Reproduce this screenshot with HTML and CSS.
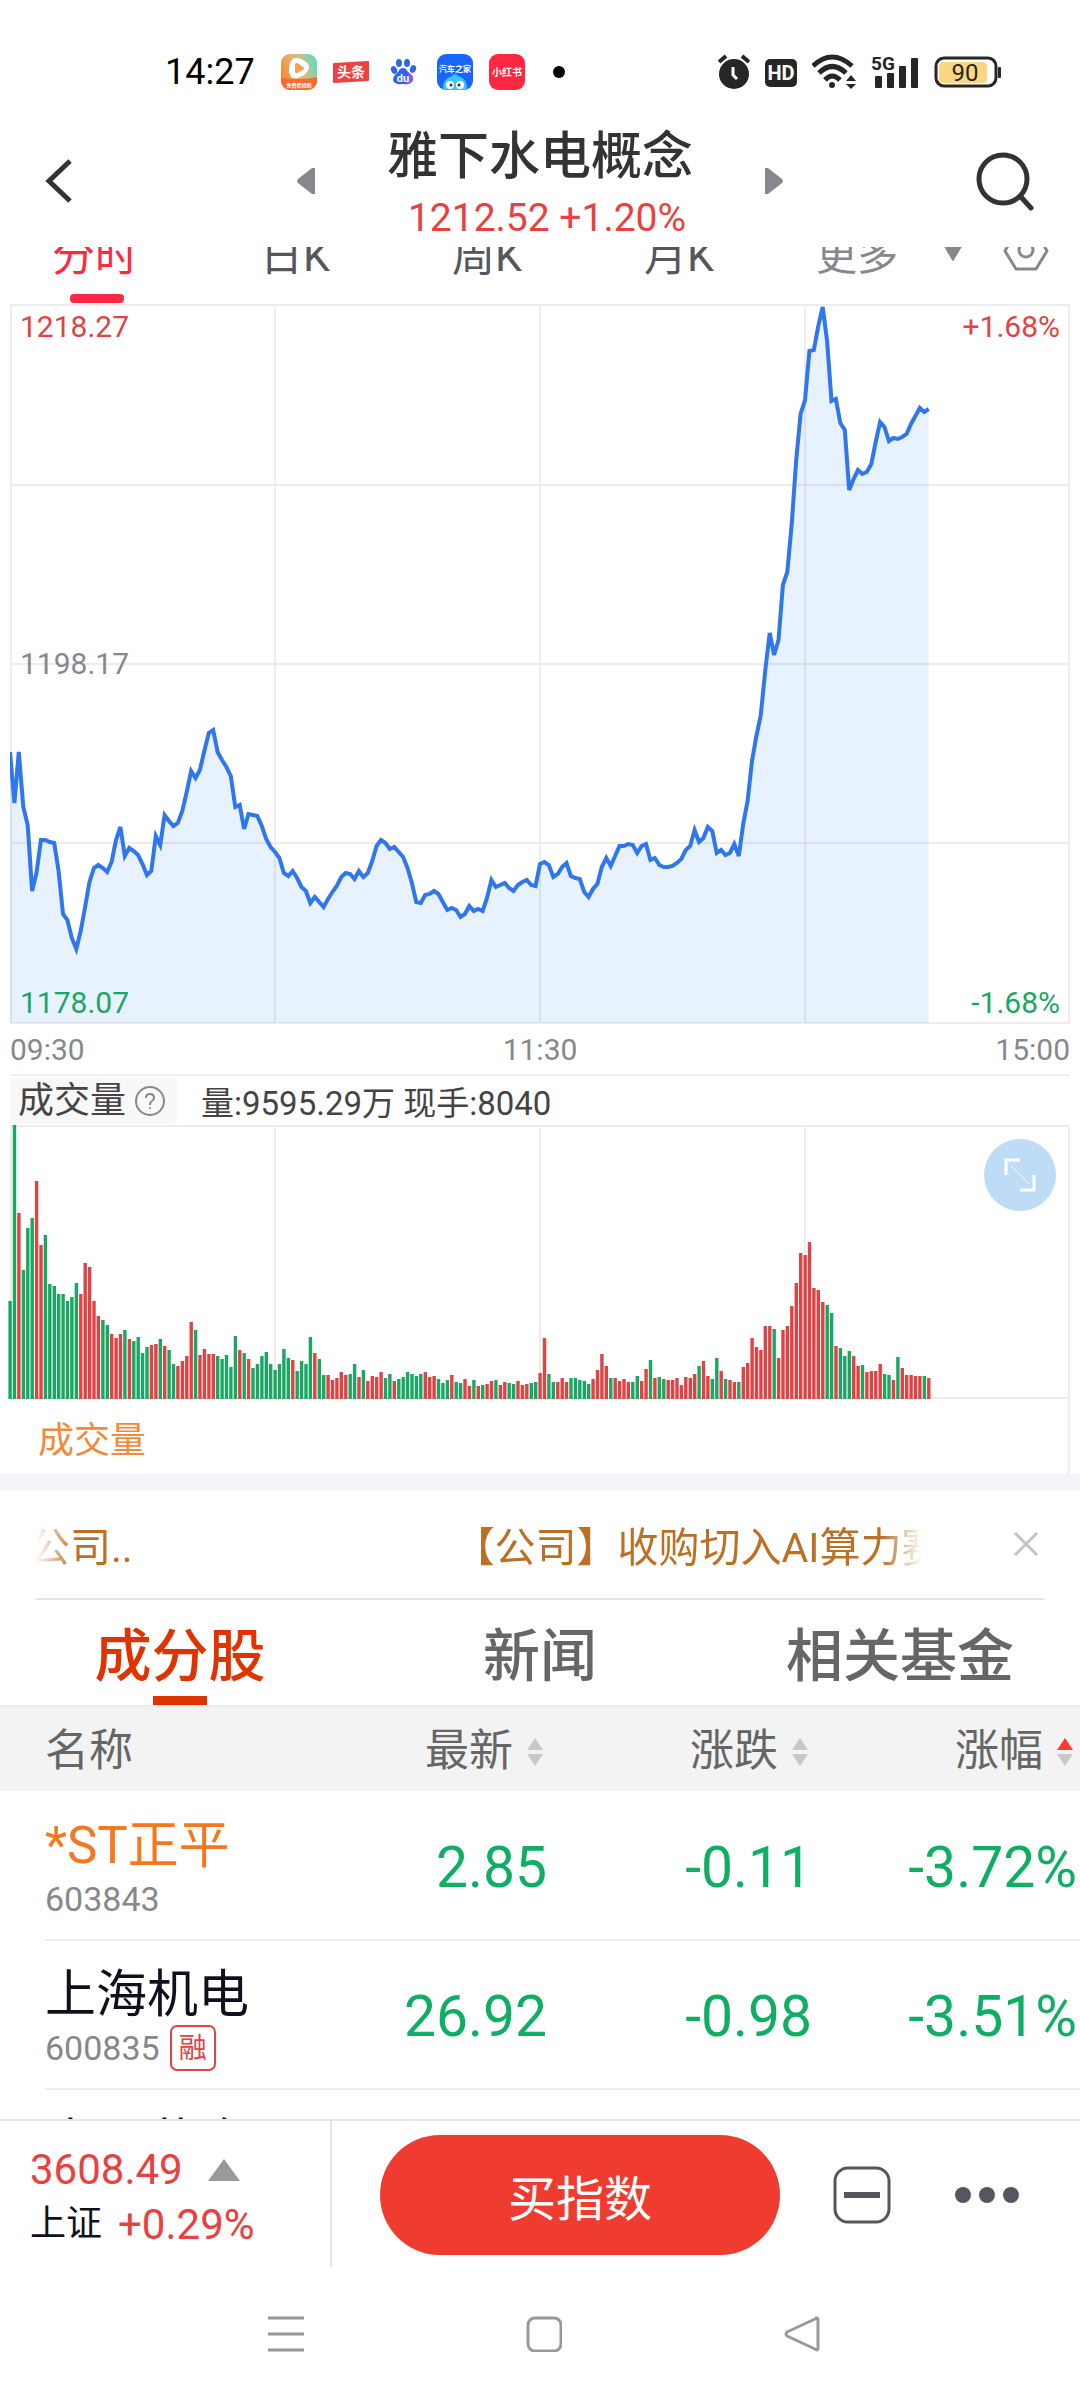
FILE: index.html
```html
<!DOCTYPE html>
<html lang="zh-CN">
<head>
    <meta charset="UTF-8">
    <meta name="viewport" content="width=device-width, initial-scale=1.0">
    <title>雅下水电概念</title>
    <link rel="stylesheet" href="styles.css">
</head>
<body>
    <div class="status-bar">
        <div class="status-left">
            <span class="clock">14:27</span>
            <svg class="app-icon" viewBox="0 0 36 36">
                <defs>
                    <linearGradient id="video" x1="0" y1="0.6" x2="1" y2="0.2">
                        <stop offset="0" stop-color="#f58a3c"/>
                        <stop offset="0.5" stop-color="#e0b878"/>
                        <stop offset="1" stop-color="#5fdcc0"/>
                    </linearGradient>
                    <clipPath id="round"><rect width="36" height="36" rx="9"/></clipPath>
                </defs>
                <g clip-path="url(#round)">
                    <rect width="36" height="36" fill="url(#video)"/>
                    <path d="M0 24 Q18 27 36 23 V36 H0Z" fill="#fb6a2c"/>
                    <path d="M10 7 Q13 2 20 5 Q29 9 28 14 Q27 20 17 24 Q9 26 8 17 Q8 11 10 7Z" fill="#fff"/>
                    <path d="M14 10 Q15 8 18 10 L22 13 Q24 15 22 16 L16 19 Q14 20 14 17Z" fill="#eda358"/>
                    <text x="18" y="33" class="t5">免费看短剧</text>
                </g>
            </svg>
            <svg class="app-icon" viewBox="0 0 36 36">
                <path d="M1 9 L35 7 Q36 7 36 8 V26 Q36 27 35 27 L1 29 Q0 29 0 28 V10 Q0 9 1 9Z" fill="#f04142"/>
                <text x="18" y="23" class="t14">头条</text>
            </svg>
            <svg class="app-icon" viewBox="0 0 36 36">
                <g fill="#2f66e8">
                    <ellipse cx="9" cy="16" rx="3" ry="4" transform="rotate(-20 9 16)"/>
                    <ellipse cx="14" cy="9" rx="3" ry="4"/>
                    <ellipse cx="22" cy="9" rx="3" ry="4"/>
                    <ellipse cx="28" cy="15" rx="3" ry="4" transform="rotate(20 28 15)"/>
                    <path d="M18 14 Q21 14 23 18 Q29 22 28 26 Q26 31 18 30 Q9 31 8 26 Q8 22 13 18 Q15 14 18 14Z"/>
                </g>
                <path d="M23 18 Q29 22 28 26 Q26 31 20 30 Q25 25 23 18Z" fill="#8a5cf0"/>
                <text x="18" y="28" class="t11">du</text>
            </svg>
            <svg class="app-icon" viewBox="0 0 36 36">
                <g clip-path="url(#round)">
                    <rect width="36" height="36" fill="#1a66fb"/>
                    <path d="M6 36 Q5 25 15 22 Q18 18 21 22 Q31 25 30 36Z" fill="#3cc4f5"/>
                    <circle cx="13" cy="31" r="4" fill="#fff"/>
                    <circle cx="23" cy="31" r="4" fill="#fff"/>
                    <circle cx="14" cy="31" r="1.5" fill="#333"/>
                    <circle cx="22" cy="31" r="1.5" fill="#333"/>
                </g>
                <text x="18" y="18" class="t8">汽车之家</text>
            </svg>
            <svg class="app-icon" viewBox="0 0 36 36">
                <rect width="36" height="36" rx="9" fill="#ff2741"/>
                <text x="18" y="22" class="t10">小红书</text>
            </svg>
            <span class="more-dot"></span>
        </div>
        <div class="status-right">
            <svg width="32" height="36" viewBox="0 0 32 36" fill="none" stroke="#262626">
                <circle cx="16" cy="20" r="15" fill="#262626" stroke="none"/>
                <path d="M1 8 L8 2 M24 2 L31 8" stroke-width="4"/>
                <path d="M15 13 V21 L19 25" stroke="#fff" stroke-width="3"/>
            </svg>
            <svg width="32" height="36" viewBox="0 0 32 36">
                <rect y="5" width="32" height="28" rx="5" fill="#262626"/>
                <text x="16" y="26" class="t20">HD</text>
            </svg>
            <svg width="44" height="36" viewBox="0 0 44 36" fill="none" stroke="#262626" stroke-width="5">
                <path d="M1 12 Q20 -6 40 12"/>
                <path d="M7 19 Q20 6 34 19"/>
                <path d="M13 26 Q20 18 28 26"/>
                <circle cx="20" cy="31" r="3" fill="#262626" stroke="none"/>
                <path d="M39 21 L44 27 H34Z M34 30 H44 L39 35Z" fill="#262626" stroke="none"/>
            </svg>
            <svg width="48" height="36" viewBox="0 0 48 36" fill="#262626">
                <rect x="4" y="22" width="7" height="12" rx="1"/>
                <rect x="16" y="19" width="7" height="15" rx="1"/>
                <rect x="28" y="12" width="7" height="22" rx="1"/>
                <rect x="40" y="4" width="7" height="30" rx="1"/>
                <text x="12" y="16" class="t19">5G</text>
            </svg>
            <svg width="68" height="36" viewBox="0 0 68 36">
                <rect x="2" y="4" width="60" height="28" rx="8" fill="#fff" stroke="#262626" stroke-width="3"/>
                <rect x="5" y="8" width="48" height="21" rx="4" fill="#fdd683"/>
                <rect x="64" y="13" width="3" height="11" rx="1" fill="#262626"/>
                <text x="31" y="27" class="t24">90</text>
            </svg>
        </div>
    </div>

    <header class="header">
        <button class="icon-btn back" aria-label="返回">
            <svg width="30" height="48" viewBox="0 0 30 48"><path d="M26 4 L5 24 L26 44" fill="none" stroke="#333" stroke-width="5"/></svg>
        </button>
        <div class="title-group">
            <button class="icon-btn" aria-label="上一个">
                <svg width="20" height="30" viewBox="0 0 20 30"><path d="M19 2 V28 L16 28 L2 17 Q0 15 2 13 L16 2Z" fill="#88878d"/></svg>
            </button>
            <div class="title">
                <h1>雅下水电概念</h1>
                <p>1212.52 +1.20%</p>
            </div>
            <button class="icon-btn" aria-label="下一个">
                <svg width="20" height="30" viewBox="0 0 20 30"><path d="M1 2 V28 L4 28 L18 17 Q20 15 18 13 L4 2Z" fill="#88878d"/></svg>
            </button>
        </div>
        <button class="icon-btn" aria-label="搜索">
            <svg width="60" height="60" viewBox="0 0 60 60" fill="none" stroke="#333" stroke-width="5" stroke-linecap="round">
                <circle cx="27" cy="28" r="24"/>
                <path d="M45 46 L55 57"/>
            </svg>
        </button>
    </header>

    <main class="content">
        <div class="period-tabs">
            <div class="periods">
                <button class="period active">分时</button>
                <button class="period">日K</button>
                <button class="period">周K</button>
                <button class="period">月K</button>
            </div>
            <div class="period-more">
                <button class="period muted">更多
                    <svg width="22" height="20" viewBox="0 0 22 20"><path d="M0 1 H22 L12 18 Q11 20 10 18Z" fill="#88878d"/></svg>
                </button>
                <button class="icon-btn" aria-label="设置">
                    <svg width="46" height="40" viewBox="0 0 46 40" fill="none" stroke="#88878d" stroke-width="3" stroke-linejoin="round">
                        <path d="M12 2 H34 L44 20 L33 38 H13 L2 20Z"/>
                        <circle cx="23" cy="19" r="7"/>
                    </svg>
                </button>
            </div>
        </div>

        <section class="chart">
            <div class="plot">
                <svg id="priceChart" viewBox="0 0 1060 720" preserveAspectRatio="none"></svg>
                <span class="mark top-left up">1218.27</span>
                <span class="mark top-right up">+1.68%</span>
                <span class="mark middle-left">1198.17</span>
                <span class="mark bottom-left down">1178.07</span>
                <span class="mark bottom-right down">-1.68%</span>
            </div>
            <div class="time-axis">
                <span>09:30</span>
                <span>11:30</span>
                <span>15:00</span>
            </div>
            <div class="volume-head">
                <button class="chip">成交量
                    <svg width="30" height="30" viewBox="0 0 30 30" fill="none" stroke="#88878d" stroke-width="2">
                        <circle cx="15" cy="15" r="14"/>
                        <path d="M11 12 Q11 8 15 8 Q19 8 19 12 Q19 14 16 16 Q15 17 15 19"/>
                        <circle cx="15" cy="22" r="1" fill="#88878d" stroke="none"/>
                    </svg>
                </button>
                <span>量:9595.29万 现手:8040</span>
            </div>
            <div class="volume-plot">
                <svg id="volumeChart" viewBox="0 0 1060 274" preserveAspectRatio="none"></svg>
                <button class="expand" aria-label="全屏">
                    <svg width="32" height="34" viewBox="0 0 32 34" fill="none" stroke="#fff" stroke-width="3">
                        <path d="M2 17 V2 H16 M30 17 V32 H16"/>
                        <path d="M7 8 L25 26" stroke-width="1"/>
                    </svg>
                </button>
            </div>
            <div class="indicator">成交量</div>
        </section>

        <div class="news-bar">
            <div class="marquee">
                <span>公司..</span>
                <span>【公司】收购切入AI算力赛道</span>
            </div>
            <button class="icon-btn" aria-label="关闭">
                <svg width="26" height="26" viewBox="0 0 26 26"><path d="M2 2 L24 24 M24 2 L2 24" stroke="#c4c4c4" stroke-width="3"/></svg>
            </button>
        </div>

        <div class="section-tabs">
            <button class="section-tab active">成分股</button>
            <button class="section-tab">新闻</button>
            <button class="section-tab">相关基金</button>
        </div>

        <table class="stocks">
            <thead>
                <tr>
                    <th>名称</th>
                    <th>最新<svg class="sort" viewBox="0 0 16 28"><path d="M8 0 L16 12 H0Z"/><path d="M0 16 H16 L8 28Z"/></svg></th>
                    <th>涨跌<svg class="sort" viewBox="0 0 16 28"><path d="M8 0 L16 12 H0Z"/><path d="M0 16 H16 L8 28Z"/></svg></th>
                    <th>涨幅<svg class="sort" viewBox="0 0 16 28"><path class="on" d="M8 0 L16 12 H0Z"/><path d="M0 16 H16 L8 28Z"/></svg></th>
                </tr>
            </thead>
            <tbody>
                <tr>
                    <td><div class="name st">*ST正平</div><div class="code">603843</div></td>
                    <td>2.85</td>
                    <td>-0.11</td>
                    <td>-3.72%</td>
                </tr>
                <tr>
                    <td><div class="name">上海机电</div><div class="code">600835<span class="badge">融</span></div></td>
                    <td>26.92</td>
                    <td>-0.98</td>
                    <td>-3.51%</td>
                </tr>
                <tr>
                    <td><div class="name">中国黄金</div></td>
                    <td></td>
                    <td></td>
                    <td></td>
                </tr>
            </tbody>
        </table>
    </main>

    <footer class="footer">
        <div class="market">
            <div class="market-row">3608.49
                <svg width="32" height="22" viewBox="0 0 32 22"><path d="M16 0 L32 22 H0Z" fill="#999"/></svg>
            </div>
            <div class="market-row"><span class="market-name">上证</span>+0.29%</div>
        </div>
        <div class="actions">
            <button class="buy">买指数</button>
            <button class="icon-btn" aria-label="删除自选">
                <svg width="58" height="58" viewBox="0 0 58 58" fill="none" stroke="#55565e">
                    <rect x="2" y="2" width="54" height="54" rx="13" stroke-width="3"/>
                    <path d="M11 29 H47" stroke-width="6"/>
                </svg>
            </button>
            <button class="icon-btn more" aria-label="更多">
                <svg width="64" height="16" viewBox="0 0 64 16" fill="#55565e">
                    <circle cx="8" cy="8" r="8"/>
                    <circle cx="32" cy="8" r="8"/>
                    <circle cx="56" cy="8" r="8"/>
                </svg>
            </button>
        </div>
    </footer>

    <nav class="system-nav">
        <button class="icon-btn" aria-label="最近任务">
            <svg width="36" height="36" viewBox="0 0 36 36" stroke="#999" stroke-width="3"><path d="M0 2 H36 M0 18 H36 M0 34 H36"/></svg>
        </button>
        <button class="icon-btn" aria-label="主页">
            <svg width="36" height="36" viewBox="0 0 36 36" fill="none" stroke="#999" stroke-width="3"><rect x="2" y="2" width="33" height="33" rx="7"/></svg>
        </button>
        <button class="icon-btn" aria-label="返回">
            <svg width="36" height="36" viewBox="0 0 36 36" fill="none" stroke="#999" stroke-width="3" stroke-linejoin="round"><path d="M34 3 V33 Q33 35 31 33 L3 20 Q1 18 3 16 L31 3 Q33 1 34 3Z"/></svg>
        </button>
    </nav>

    <script src="script.js"></script>
</body>
</html>
```

FILE: styles.css
```css
* {
    box-sizing: border-box;
}

body {
    margin: 0;
    height: 100vh;
    display: flex;
    flex-direction: column;
    background: #fff;
    color: #333;
    font-family: Roboto, "Noto Sans CJK SC", sans-serif;
}

button {
    margin: 0;
    padding: 0;
    border: none;
    background: none;
    color: inherit;
    font: inherit;
    cursor: pointer;
}

svg {
    display: block;
    flex-shrink: 0;
}

.icon-btn {
    display: flex;
    align-items: center;
}

.up {
    color: #e04343;
}

.down {
    color: #1aa764;
}

/* status bar */
.status-bar {
    display: flex;
    align-items: center;
    justify-content: space-between;
    height: 120px;
    padding: 24px 78px 0 165px;
}

.status-left {
    display: flex;
    align-items: center;
    gap: 16px;
}

.status-right {
    display: flex;
    align-items: center;
    gap: 15px;
}

.clock {
    margin-right: 10px;
    color: #000;
    font-size: 36px;
}

.app-icon {
    width: 36px;
    height: 36px;
}

.more-dot {
    width: 12px;
    height: 12px;
    margin-left: 12px;
    border-radius: 50%;
    background: #000;
}

.status-bar text {
    text-anchor: middle;
    fill: #fff;
    font-weight: 700;
}

.t5 { font-size: 5px; }
.t8 { font-size: 8px; }
.t10 { font-size: 10px; }
.t11 { font-size: 11px; }
.t14 { font-size: 14px; }
.t20 { font-size: 20px; }

.status-bar .t19 {
    fill: #262626;
    font-size: 19px;
}

.status-bar .t24 {
    fill: #262626;
    font-size: 24px;
    font-weight: 400;
}

/* header */
.header {
    display: flex;
    align-items: center;
    justify-content: space-between;
    height: 127px;
    padding: 0 44px 6px;
}

.back {
    width: 60px;
}

.title-group {
    display: flex;
    align-items: center;
    justify-content: space-between;
    width: 488px;
}

.title {
    padding-top: 8px;
    text-align: center;
}

.title h1 {
    margin: 0;
    font-size: 51px;
    font-weight: 500;
    line-height: 66px;
}

.title p {
    margin: 0;
    padding-left: 14px;
    color: #e8413f;
    font-size: 39px;
    line-height: 56px;
}

.content {
    flex: 1;
    min-height: 0;
    overflow: hidden;
}

/* scrolled partly under the header */
.period-tabs {
    display: flex;
    justify-content: space-between;
    height: 85px;
    margin-top: -28px;
    padding: 0 31px 0 52px;
}

.periods {
    display: flex;
    gap: 122px;
}

.period-more {
    display: flex;
    gap: 39px;
    height: 64px;
}

.period {
    position: relative;
    display: flex;
    align-items: center;
    gap: 44px;
    height: 66px;
    color: #55565e;
    font-size: 43px;
}

.period.muted {
    color: #88878d;
    font-size: 41px;
}

.period.active {
    color: #ff2741;
}

.period.active::after {
    content: "";
    position: absolute;
    left: 50%;
    bottom: -18px;
    width: 54px;
    height: 9px;
    margin-left: -25px;
    border-radius: 4px;
    background: #ff2741;
}

/* charts */
.chart {
    padding: 0 10px;
    border-bottom: 16px solid #f2f4f8;
}

.plot,
.volume-plot {
    position: relative;
}

.plot svg {
    width: 100%;
    height: 720px;
}

.volume-plot > svg {
    width: 100%;
    height: 274px;
    overflow: visible;
}

.grid {
    fill: none;
    stroke: #000;
    stroke-opacity: 0.07;
    stroke-width: 2;
}

.price-line {
    fill: none;
    stroke: #3076ec;
    stroke-width: 4;
}

.price-area {
    fill: #e8f1fe;
}

.bar-r {
    fill: #e04343;
}

.bar-g {
    fill: #1aa764;
}

.mark {
    position: absolute;
    font-size: 30px;
    line-height: 40px;
}

.top-left {
    top: 3px;
    left: 10px;
}

.top-right {
    top: 3px;
    right: 10px;
}

.middle-left {
    top: 50%;
    left: 10px;
    margin-top: -20px;
    color: #88878d;
}

.bottom-left {
    bottom: 1px;
    left: 10px;
}

.bottom-right {
    bottom: 1px;
    right: 10px;
}

.time-axis {
    display: flex;
    justify-content: space-between;
    height: 50px;
    color: #88878d;
    font-size: 30px;
    line-height: 52px;
}

.volume-head {
    display: flex;
    align-items: center;
    gap: 24px;
    height: 51px;
    border-top: 2px solid #f0f0f0;
    color: #444;
    font-size: 33px;
}

.chip {
    display: flex;
    align-items: center;
    gap: 9px;
    height: 46px;
    padding: 0 12px 0 8px;
    border-radius: 6px;
    background: #f8f8f8;
    font-size: 36px;
    line-height: 50px;
}

.expand {
    position: absolute;
    top: 14px;
    right: 14px;
    display: flex;
    align-items: center;
    justify-content: center;
    width: 72px;
    height: 72px;
    border-radius: 50%;
    background: #bedcf6;
}

.indicator {
    height: 75px;
    padding: 8px 28px 0;
    border-right: 2px solid #eee;
    color: #f08b3e;
    font-size: 36px;
    line-height: 69px;
}

/* scrolling news line */
.news-bar {
    display: flex;
    align-items: center;
    justify-content: space-between;
    height: 110px;
    margin: 0 36px;
    padding-right: 5px;
    border-bottom: 2px solid #e5e5e5;
}

.marquee {
    display: flex;
    gap: 321px;
    width: 886px;
    overflow: hidden;
    color: #bd6f24;
    font-size: 41px;
    white-space: nowrap;
    -webkit-mask-image: linear-gradient(to right, transparent, #000 40px, #000 846px, transparent);
    mask-image: linear-gradient(to right, transparent, #000 40px, #000 846px, transparent);
}

.marquee span:first-child {
    margin-left: -7px;
}

/* section tabs */
.section-tabs {
    display: grid;
    grid-template-columns: repeat(3, 1fr);
    border-bottom: 2px solid #ececec;
}

.section-tab {
    position: relative;
    height: 105px;
    padding-top: 8px;
    color: #666;
    font-size: 57px;
    font-weight: 500;
    line-height: 97px;
}

.section-tab.active {
    color: #e03400;
}

.section-tab.active::after {
    content: "";
    position: absolute;
    left: 50%;
    bottom: 0;
    width: 54px;
    height: 9px;
    margin-left: -27px;
    background: #e03400;
}

/* stock table */
.stocks {
    width: 100%;
    border-collapse: collapse;
    table-layout: fixed;
}

.stocks th {
    height: 84px;
    padding: 4px 7px 0 0;
    background: #f3f3f3;
    color: #666;
    font-size: 44px;
    font-weight: 400;
    line-height: 60px;
    text-align: right;
    white-space: nowrap;
}

.stocks th:first-child {
    width: 26.4%;
    padding-left: 45px;
    text-align: left;
}

.sort {
    display: inline-block;
    width: 16px;
    height: 28px;
    margin-left: 14px;
    fill: #c8c8c8;
}

.sort .on {
    fill: #ff3b30;
}

.stocks td {
    height: 149px;
    padding: 4px 3px 0 0;
    border-bottom: 2px solid #eee;
    color: #0fae64;
    font-size: 57px;
    text-align: right;
}

.stocks td:first-child {
    position: relative;
    padding: 25px 0 0 45px;
    border-bottom: none;
    text-align: left;
    vertical-align: top;
}

.stocks td:first-child::after {
    content: "";
    position: absolute;
    left: 45px;
    right: 0;
    bottom: -1px;
    height: 2px;
    background: #eee;
}

.name {
    color: #10101c;
    font-size: 51px;
    line-height: 60px;
}

.name.st {
    color: #f5781e;
}

.code {
    display: flex;
    align-items: center;
    gap: 10px;
    color: #88878d;
    font-size: 34px;
    line-height: 46px;
}

.badge {
    width: 46px;
    height: 46px;
    border: 2px solid #e04343;
    border-radius: 7px;
    color: #e04343;
    font-size: 28px;
    line-height: 43px;
    text-align: center;
}

/* footer */
.footer {
    display: flex;
    height: 148px;
    border-top: 2px solid #e5e5e5;
}

.market {
    display: flex;
    flex-direction: column;
    justify-content: center;
    width: 332px;
    padding: 6px 0 0 30px;
    border-right: 2px solid #e5e5e5;
    color: #e8413f;
    font-size: 42px;
    line-height: 55px;
}

.market-row {
    display: flex;
    align-items: center;
    gap: 25px;
}

.market-name {
    margin-right: -9px;
    color: #10101c;
    font-size: 36px;
}

.actions {
    flex: 1;
    display: flex;
    align-items: center;
    gap: 53px;
    padding: 2px 0 0 48px;
}

.more {
    margin-left: 11px;
}

.buy {
    width: 400px;
    height: 120px;
    border-radius: 60px;
    background: #f03b30;
    color: #fff;
    font-size: 48px;
}

/* system navigation */
.system-nav {
    display: flex;
    justify-content: space-between;
    align-items: center;
    height: 133px;
    padding: 0 260px 0 268px;
}
```

FILE: script.js
```js
// one sample per minute, distance from the top of the 720 high plot
const prices = [
    448, 499, 448, 503, 521, 587, 569, 536, 536, 538, 539, 567, 610, 616, 634, 645, 627, 603, 578, 564,
    561, 564, 568, 558, 536, 523, 552, 544, 547, 551, 560, 571, 567, 532, 541, 511, 517, 522, 519, 507,
    488, 467, 474, 466, 447, 429, 426, 448, 456, 463, 472, 503, 501, 525, 510, 511, 512, 522, 535, 543,
    548, 554, 569, 572, 567, 574, 583, 587, 599, 593, 598, 603, 595, 588, 582, 573, 569, 570, 575, 567,
    573, 569, 557, 542, 536, 539, 545, 543, 548, 553, 564, 579, 598, 599, 591, 590, 587, 590, 598, 606,
    604, 606, 613, 610, 602, 607, 605, 607, 594, 576, 583, 581, 579, 584, 587, 581, 578, 576, 581, 582,
    560, 558, 561, 573, 570, 563, 559, 572, 574, 575, 588, 593, 585, 580, 563, 554, 562, 552, 542, 542,
    540, 541, 549, 542, 540, 556, 554, 561, 563, 563, 562, 559, 555, 546, 542, 526, 538, 534, 523, 527,
    549, 546, 551, 549, 540, 552, 520, 497, 457, 432, 411, 366, 329, 351, 336, 281, 268, 219, 156, 110,
    96, 47, 46, 22, 3, 37, 97, 95, 119, 126, 186, 175, 166, 170, 168, 160, 138, 118, 123, 137,
    134, 135, 133, 130, 120, 112, 104, 108, 105
];

// bar height and colour, r = up, g = down
const volumes = `
    98g 274g 186r 129g 171g 181g 218r 154r 164g 115g 113g 105g 105g 98g 102g 116g 105r 136r 132r 98r
    83r 79g 74g 65r 61r 65r 69g 60r 58g 62g 46g 52g 54r 55r 60g 53r 49g 35g 33r 38r
    43r 77r 69g 44r 50r 45r 45r 43g 40g 44g 32g 63g 49r 46g 40r 31g 35g 43g 47g 35g
    29g 35g 50g 41g 39r 28g 38g 35g 62g 46r 40g 24g 24r 19r 21r 27r 24r 25g 35g 22r
    29g 18r 23r 22r 27r 21g 25g 18r 20g 22g 27g 25g 23g 25g 27r 22r 23r 20g 16g 19g
    24r 17g 16g 20r 13r 19g 13r 14g 15r 18r 19g 14r 17r 16g 15g 18r 14r 15r 16g 17g
    26r 61r 25g 17g 17r 21r 17r 21g 21g 19g 18g 15g 20r 29r 45r 33r 21g 21r 18r 20r
    17r 17g 23g 18r 30r 39g 21r 22g 20g 19r 19r 21r 14r 22r 21r 25r 33g 38r 23r 20g
    41g 28r 20g 19r 17r 17g 32r 36r 61r 52r 49r 73r 73r 70g 41r 69r 73r 93r 116r 146r
    144r 157r 111r 109r 97r 94g 86g 53r 51g 43g 48g 43r 33r 34g 27r 28r 28r 35r 25g 24g
    19r 42g 31r 24r 24r 23r 23r 23g 21r
`.trim().split(/\s+/);

const step = 1060 / 240;

const points = prices.map((y, i) => `${(i * step).toFixed(1)},${y}`).join(' ');
const lastX = ((prices.length - 1) * step).toFixed(1);

document.getElementById('priceChart').innerHTML = `
    <polygon class="price-area" points="0,719 ${points} ${lastX},719"/>
    <path class="grid" d="M1 1 H1059 V719 H1Z M0 181 H1060 M0 360 H1060 M0 539 H1060 M265 0 V720 M530 0 V720 M795 0 V720"/>
    <polyline class="price-line" points="${points}"/>
`;

const bars = volumes.map((item, i) => {
    const height = parseInt(item);
    const x = (i * step - 1.6).toFixed(1);
    return `<rect class="bar-${item.slice(-1)}" x="${x}" y="${274 - height}" width="3.4" height="${height}"/>`;
}).join('');

document.getElementById('volumeChart').innerHTML = `
    <path class="grid" d="M1 1 H1059 V273 H1Z M265 0 V274 M530 0 V274 M795 0 V274"/>
    ${bars}
`;
```
